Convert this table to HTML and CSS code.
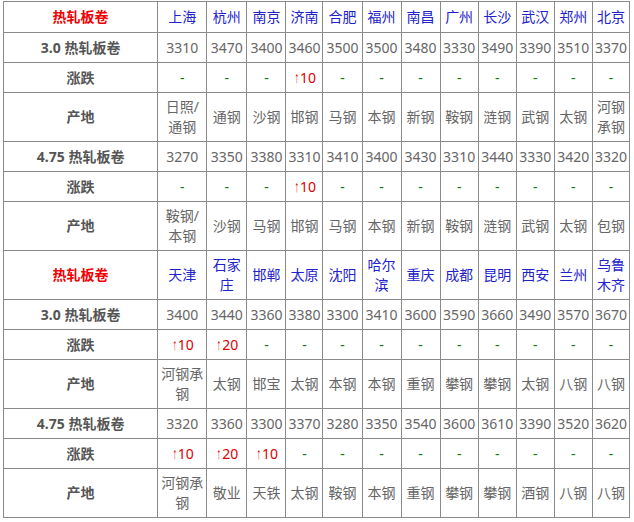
FILE: index.html
```html
<!DOCTYPE html>
<html lang="zh">
<head>
<meta charset="utf-8">
<title>热轧板卷</title>
<link rel="stylesheet" href="styles.css">
</head>
<body>
<table class="price">
<colgroup>
<col class="c0"><col class="c1"><col class="c2"><col class="c3"><col class="c4"><col class="c5"><col class="c6"><col class="c7"><col class="c8"><col class="c9"><col class="c10"><col class="c11"><col class="c12">
</colgroup>
<tbody>
<tr class="head"><td class="title">热轧板卷</td><td class="city">上海</td><td class="city">杭州</td><td class="city">南京</td><td class="city">济南</td><td class="city">合肥</td><td class="city">福州</td><td class="city">南昌</td><td class="city">广州</td><td class="city">长沙</td><td class="city">武汉</td><td class="city">郑州</td><td class="city">北京</td></tr>
<tr class="row"><td class="label">3.0 热轧板卷</td><td>3310</td><td>3470</td><td>3400</td><td>3460</td><td>3500</td><td>3500</td><td>3480</td><td>3330</td><td>3490</td><td>3390</td><td>3510</td><td>3370</td></tr>
<tr class="row"><td class="label">涨跌</td><td class="flat">-</td><td class="flat">-</td><td class="flat">-</td><td class="up"><span class="arrow">↑</span>10</td><td class="flat">-</td><td class="flat">-</td><td class="flat">-</td><td class="flat">-</td><td class="flat">-</td><td class="flat">-</td><td class="flat">-</td><td class="flat">-</td></tr>
<tr class="row"><td class="label">产地</td><td>日照/通钢</td><td>通钢</td><td>沙钢</td><td>邯钢</td><td>马钢</td><td>本钢</td><td>新钢</td><td>鞍钢</td><td>涟钢</td><td>武钢</td><td>太钢</td><td>河钢承钢</td></tr>
<tr class="row"><td class="label">4.75 热轧板卷</td><td>3270</td><td>3350</td><td>3380</td><td>3310</td><td>3410</td><td>3400</td><td>3430</td><td>3310</td><td>3440</td><td>3330</td><td>3420</td><td>3320</td></tr>
<tr class="row"><td class="label">涨跌</td><td class="flat">-</td><td class="flat">-</td><td class="flat">-</td><td class="up"><span class="arrow">↑</span>10</td><td class="flat">-</td><td class="flat">-</td><td class="flat">-</td><td class="flat">-</td><td class="flat">-</td><td class="flat">-</td><td class="flat">-</td><td class="flat">-</td></tr>
<tr class="row"><td class="label">产地</td><td>鞍钢/本钢</td><td>沙钢</td><td>马钢</td><td>邯钢</td><td>马钢</td><td>本钢</td><td>新钢</td><td>鞍钢</td><td>涟钢</td><td>武钢</td><td>太钢</td><td>包钢</td></tr>
<tr class="head"><td class="title">热轧板卷</td><td class="city">天津</td><td class="city">石家庄</td><td class="city">邯郸</td><td class="city">太原</td><td class="city">沈阳</td><td class="city">哈尔滨</td><td class="city">重庆</td><td class="city">成都</td><td class="city">昆明</td><td class="city">西安</td><td class="city">兰州</td><td class="city">乌鲁木齐</td></tr>
<tr class="row"><td class="label">3.0 热轧板卷</td><td>3400</td><td>3440</td><td>3360</td><td>3380</td><td>3300</td><td>3410</td><td>3600</td><td>3590</td><td>3660</td><td>3490</td><td>3570</td><td>3670</td></tr>
<tr class="row"><td class="label">涨跌</td><td class="up"><span class="arrow">↑</span>10</td><td class="up"><span class="arrow">↑</span>20</td><td class="flat">-</td><td class="flat">-</td><td class="flat">-</td><td class="flat">-</td><td class="flat">-</td><td class="flat">-</td><td class="flat">-</td><td class="flat">-</td><td class="flat">-</td><td class="flat">-</td></tr>
<tr class="row"><td class="label">产地</td><td>河钢承钢</td><td>太钢</td><td>邯宝</td><td>太钢</td><td>本钢</td><td>本钢</td><td>重钢</td><td>攀钢</td><td>攀钢</td><td>太钢</td><td>八钢</td><td>八钢</td></tr>
<tr class="row"><td class="label">4.75 热轧板卷</td><td>3320</td><td>3360</td><td>3300</td><td>3370</td><td>3280</td><td>3350</td><td>3540</td><td>3600</td><td>3610</td><td>3390</td><td>3520</td><td>3620</td></tr>
<tr class="row"><td class="label">涨跌</td><td class="up"><span class="arrow">↑</span>10</td><td class="up"><span class="arrow">↑</span>20</td><td class="up"><span class="arrow">↑</span>10</td><td class="flat">-</td><td class="flat">-</td><td class="flat">-</td><td class="flat">-</td><td class="flat">-</td><td class="flat">-</td><td class="flat">-</td><td class="flat">-</td><td class="flat">-</td></tr>
<tr class="row"><td class="label">产地</td><td>河钢承钢</td><td>敬业</td><td>天铁</td><td>太钢</td><td>鞍钢</td><td>本钢</td><td>重钢</td><td>攀钢</td><td>攀钢</td><td>酒钢</td><td>八钢</td><td>八钢</td></tr>
</tbody>
</table>
</body>
</html>
```
FILE: styles.css
```css
html, body {
  margin: 0;
  padding: 0;
  background: #fff;
}
body {
  font-family: "Noto Sans", "Noto Sans CJK SC", sans-serif;
  font-size: 14px;
  color: #666;
}
.price {
  margin: 1px 0 0 3px;
  width: 627px;
  table-layout: fixed;
  border-collapse: collapse;
  border: 1px solid #333;
}
.c0 { width: 154px; }
.c1 { width: 49px; }
.c2 { width: 40px; }
.c3 { width: 39px; }
.c4 { width: 37px; }
.c5 { width: 39px; }
.c6 { width: 39px; }
.c7 { width: 39px; }
.c8 { width: 38px; }
.c9 { width: 38px; }
.c10 { width: 38px; }
.c11 { width: 38px; }
.c12 { width: 37px; }
.price td {
  border: 1px solid #8a8a8a;
  padding: 4px 2px;
  line-height: 20px;
  text-align: center;
  vertical-align: middle;
  color: #666;
}
.price tr.row { height: 30px; }
.price tr.head { height: 31px; }
.price td.title {
  color: #f00000;
  font-weight: bold;
}
.price td.city { color: #2222cc; }
.price td.label {
  color: #555;
  font-weight: bold;
}
.price td.flat { color: #0a7a0a; }
.price td.up { color: #e00000; }
.arrow {
  display: inline-block;
  width: 7px;
  font-family: "Liberation Sans", sans-serif;
  font-size: 16px;
  line-height: 20px;
  transform: scaleX(0.55);
  transform-origin: center;
}
```
